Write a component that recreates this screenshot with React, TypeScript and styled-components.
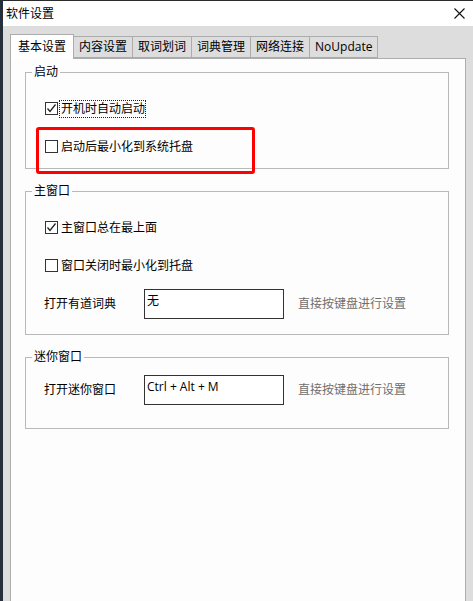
import styled, { createGlobalStyle } from "styled-components";

const GlobalStyle = createGlobalStyle`
  html, body {
    margin: 0;
    padding: 0;
    background: #27303a;
  }
  body {
    font-family: "Open Sans", "Noto Sans CJK SC", "Noto Sans", sans-serif;
    font-size: 12px;
    color: #000;
  }
  * {
    box-sizing: border-box;
  }
`;

const Screen = styled.div`
  position: relative;
  width: 473px;
  height: 601px;
  overflow: hidden;
  display: flex;
`;

const Window = styled.div`
  margin-left: 3px;
  flex: 1;
  display: flex;
  flex-direction: column;
  background: #dddddd;
  border-top: 1px solid #2b2b2b;
`;

const TitleBar = styled.div`
  height: 25px;
  flex-shrink: 0;
  display: flex;
  align-items: center;
  justify-content: space-between;
  padding: 0 8px 0 3px;
  background: #ffffff;
  line-height: 14px;
`;

const Body = styled.div`
  flex: 1;
  display: flex;
  flex-direction: column;
  padding: 9px 7px 0 7px;
`;

const TabStrip = styled.div`
  display: flex;
  align-items: flex-end;
  height: 24px;
  position: relative;
  z-index: 1;
  margin-bottom: -1px;
`;

const Tab = styled.div<{ $active?: boolean }>`
  height: ${(p) => (p.$active ? "25px" : "22px")};
  margin-bottom: ${(p) => (p.$active ? "0" : "1px")};
  display: flex;
  align-items: center;
  padding: ${(p) => (p.$active ? "0 7px 1px" : "0 5px")};
  background: ${(p) => (p.$active ? "#ffffff" : "#dddddd")};
  border: 1px solid #acacac;
  border-left: ${(p) => (p.$active ? "1px solid #acacac" : "none")};
  border-bottom: ${(p) => (p.$active ? "none" : "1px solid #acacac")};
  line-height: 14px;
  white-space: nowrap;
`;

const Panel = styled.div`
  flex: 1;
  display: flex;
  flex-direction: column;
  gap: 15px;
  background: #fdfdfd;
  border: 1px solid #adadad;
  border-bottom: none;
  padding: 6px 16px 0 14px;
`;

const Group = styled.fieldset`
  margin: 0;
  padding: 0;
  min-width: 0;
  border: 1px solid #b9b9b9;
`;

const Legend = styled.legend`
  margin-left: 6px;
  padding: 0 2px;
  line-height: 14px;
  font-size: 12px;
`;

const GroupBody = styled.div<{ $top: number; $bottom: number }>`
  display: flex;
  flex-direction: column;
  padding: ${(p) => `${p.$top}px 0 ${p.$bottom}px 19px`};
`;

const CheckRow = styled.div`
  height: 19px;
  display: flex;
  align-items: center;
  & + & {
    margin-top: 19px;
  }
`;

const Box = styled.span`
  width: 13px;
  height: 13px;
  flex-shrink: 0;
  border: 1px solid #333333;
  background: #ffffff;
  display: flex;
  align-items: center;
  justify-content: center;
`;

const CheckLabel = styled.span<{ $focused?: boolean }>`
  margin-left: 1px;
  line-height: 16px;
  padding: 0 0 0 1px;
  border: 1px dotted ${(p) => (p.$focused ? "#222" : "transparent")};
`;

const FieldRow = styled.div<{ $gap?: number }>`
  display: flex;
  align-items: center;
  margin-top: ${(p) => p.$gap ?? 0}px;
  margin-left: -1px;
`;

const FieldLabel = styled.span`
  width: 100px;
  line-height: 14px;
`;

const KeyInput = styled.div`
  width: 140px;
  height: 30px;
  border: 1px solid #333333;
  background: #ffffff;
  padding: 4px 2px;
  line-height: 14px;
`;

const Hint = styled.span`
  margin-left: 14px;
  color: #6e6e6e;
  line-height: 14px;
`;

const Highlight = styled.div`
  position: absolute;
  left: 36px;
  top: 127px;
  width: 219px;
  height: 47px;
  border: 3px solid #ff0000;
  border-radius: 3px;
  pointer-events: none;
`;

const CloseIcon = () => (
  <svg width="11" height="11" viewBox="0 0 11 11">
    <path d="M0.5 0.5 L10.5 10.5 M10.5 0.5 L0.5 10.5" stroke="#111" strokeWidth="1.1" />
  </svg>
);

const Checkbox = ({
  checked,
  focused,
  label,
}: {
  checked?: boolean;
  focused?: boolean;
  label: string;
}) => (
  <CheckRow>
    <Box>
      {checked && (
        <svg width="11" height="11" viewBox="0 0 11 11">
          <polyline points="1.5,5.5 4,8.5 9.5,1.5" fill="none" stroke="#222" strokeWidth="1.3" />
        </svg>
      )}
    </Box>
    <CheckLabel $focused={focused}>{label}</CheckLabel>
  </CheckRow>
);

const tabs = ["基本设置", "内容设置", "取词划词", "词典管理", "网络连接", "NoUpdate"];

export default function App() {
  return (
    <Screen>
      <GlobalStyle />
      <Window>
        <TitleBar>
          <span>软件设置</span>
          <CloseIcon />
        </TitleBar>
        <Body>
          <TabStrip>
            {tabs.map((t, i) => (
              <Tab key={t} $active={i === 0}>
                {t}
              </Tab>
            ))}
          </TabStrip>
          <Panel>
            <Group>
              <Legend>启动</Legend>
              <GroupBody $top={20} $bottom={12}>
                <Checkbox checked focused label="开机时自动启动" />
                <Checkbox label="启动后最小化到系统托盘" />
              </GroupBody>
            </Group>

            <Group>
              <Legend>主窗口</Legend>
              <GroupBody $top={20} $bottom={15}>
                <Checkbox checked label="主窗口总在最上面" />
                <Checkbox label="窗口关闭时最小化到托盘" />
                <FieldRow $gap={14}>
                  <FieldLabel>打开有道词典</FieldLabel>
                  <KeyInput>无</KeyInput>
                  <Hint>直接按键盘进行设置</Hint>
                </FieldRow>
              </GroupBody>
            </Group>

            <Group>
              <Legend>迷你窗口</Legend>
              <GroupBody $top={11} $bottom={23}>
                <FieldRow>
                  <FieldLabel>打开迷你窗口</FieldLabel>
                  <KeyInput>Ctrl + Alt + M</KeyInput>
                  <Hint>直接按键盘进行设置</Hint>
                </FieldRow>
              </GroupBody>
            </Group>
          </Panel>
        </Body>
      </Window>
      <Highlight />
    </Screen>
  );
}
